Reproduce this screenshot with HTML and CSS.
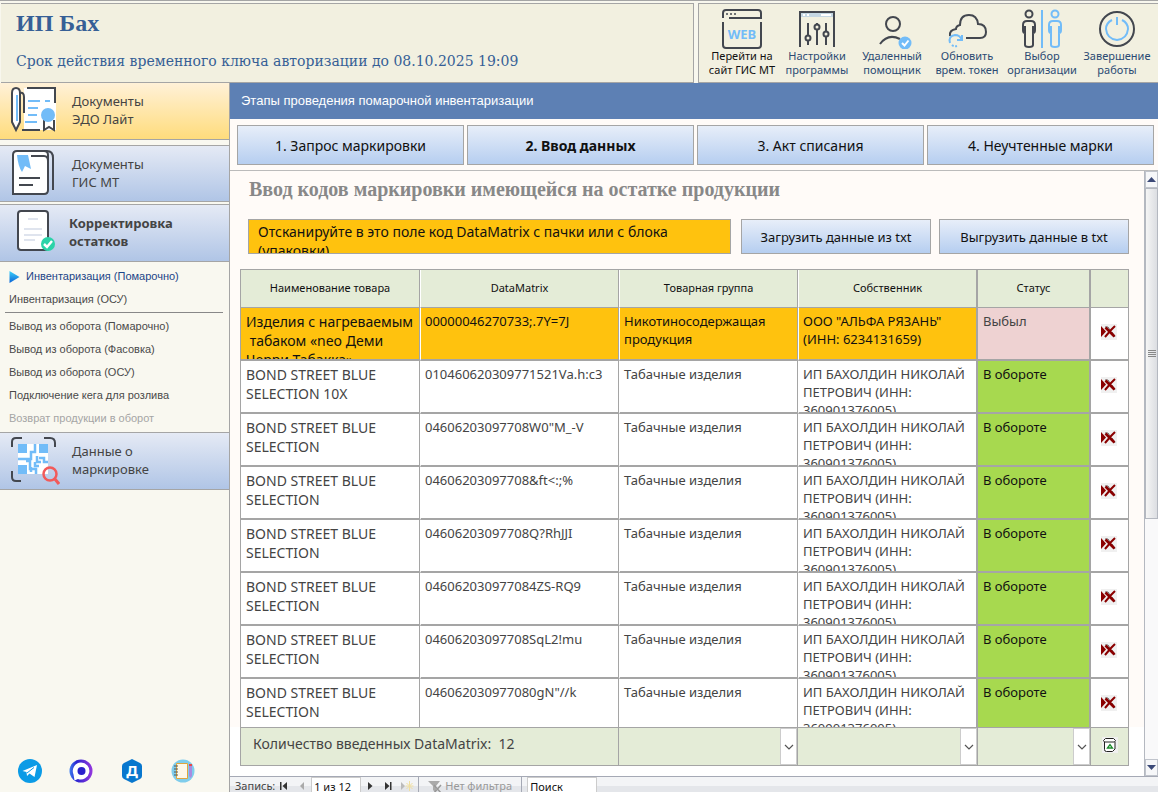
FILE: index.html
```html
<!DOCTYPE html>
<html lang="ru">
<head>
    <meta charset="UTF-8">
    <meta name="viewport" content="width=device-width, initial-scale=1.0">
    <title>Инвентаризация (Помарочно)</title>
    <link rel="stylesheet" href="styles.css">
</head>
<body>

<!-- Shared icons -->
<svg class="sprite" aria-hidden="true">
    <symbol id="icon-delete" viewBox="0 0 16 16">
        <rect width="16" height="16" fill="#f0f0f0"/>
        <path d="M4 3h3l2 3M11 8l3 5M4 13l2-3" stroke="#666" fill="none"/>
        <path d="M0 2l5 5.500L0 13z" fill="#8b0000"/>
        <path d="M4.500 3.500l9 9" stroke="#8b0000" stroke-width="2.600"/>
        <path d="M14 2L10 6 4 13" stroke="#8b0000" stroke-width="2" fill="none"/>
    </symbol>
    <symbol id="icon-chevron" viewBox="0 0 10 6">
        <path d="M1 1l4 4 4-4" fill="none" stroke="#555" stroke-width="1.200"/>
    </symbol>
</svg>

<div class="app">
    <!-- Top header -->
    <header class="header">
        <div class="company">
            <h1>ИП Бах</h1>
            <p>Срок действия временного ключа авторизации до 08.10.2025 19:09</p>
        </div>
        <nav class="toolbar">
            <button class="tool tool-active">
                <svg viewBox="0 0 40 40" fill="none" stroke="#43474f" stroke-width="2">
                    <path d="M1 9V4q0-3 3-3h32q3 0 3 3v5H7M1 13v23q0 3 3 3h32q3 0 3-3V13"/>
                    <path d="M4 5h2M8 5h2M12 5h2" stroke-width="1.500"/>
                    <text x="20" y="30" class="web-text">WEB</text>
                </svg>
                <span>Перейти на<br>сайт ГИС МТ</span>
            </button>
            <button class="tool">
                <svg viewBox="0 0 40 40" fill="none" stroke="#43474f" stroke-width="2">
                    <path d="M3 3h34v5H3z" fill="#c5d7e3" stroke="none"/>
                    <path d="M3 38V3h34v35"/>
                    <path d="M6 6h2M10 6h2M24 6h10" stroke="#fff"/>
                    <path d="M11 14v13M11 32v4M20 14v2M20 21v15M29 14v8M29 27v9"/>
                    <circle cx="11" cy="29" r="2.500"/><circle cx="20" cy="18" r="2.500"/><circle cx="29" cy="25" r="2.500"/>
                </svg>
                <span>Настройки<br>программы</span>
            </button>
            <button class="tool">
                <svg viewBox="0 0 40 40" fill="none" stroke="#43474f" stroke-width="2">
                    <circle cx="21" cy="15" r="7"/>
                    <path d="M8 35Q16 24 28 30"/>
                    <circle cx="33" cy="34" r="6.500" fill="#72bcf8" stroke="none"/>
                    <path d="M30 34l2.500 2.500 4-5" stroke="#fff"/>
                </svg>
                <span>Удаленный<br>помощник</span>
            </button>
            <button class="tool">
                <svg viewBox="0 0 40 40" fill="none" stroke="#43474f" stroke-width="2">
                    <path d="M3 27q-1-6 6-7 0-3 4-4 0-10 9-10 8 0 9 9 8 0 8 8 0 6-6 6H19"/>
                    <path d="M3 34q-2-7 5-8 5 0 7 5M10 31h5v-5" stroke="#72bcf8"/>
                    <path d="M5 36q2 2 5 1" stroke="#72bcf8" stroke-dasharray="2 1.500"/>
                </svg>
                <span>Обновить<br>врем. токен</span>
            </button>
            <button class="tool">
                <svg viewBox="0 0 40 40" fill="none" stroke="#43474f" stroke-width="2">
                    <path d="M20 1v38" stroke="#72bcf8"/>
                    <g><circle cx="7" cy="5" r="3.500"/><path d="M3 24q-2 0-2-3v-5q0-4 4-4h4q4 0 4 4v5q0 3-2 3v12q0 2-4 2t-4-2V17M11 17v8"/></g>
                    <g stroke="#72bcf8"><circle cx="33" cy="5" r="3.500"/><path d="M29 24q-2 0-2-3v-5q0-4 4-4h4q4 0 4 4v5q0 3-2 3v12q0 2-4 2t-4-2V17M37 17v8"/></g>
                </svg>
                <span>Выбор<br>организации</span>
            </button>
            <button class="tool">
                <svg viewBox="0 0 40 40" fill="none" stroke="#43474f" stroke-width="2">
                    <circle cx="20" cy="20" r="17"/>
                    <path d="M15 11q-6 3-6 9 1 10 11 11 10-1 11-11 0-6-6-9M20 8v8" stroke="#72bcf8"/>
                </svg>
                <span>Завершение<br>работы</span>
            </button>
        </nav>
    </header>

    <div class="content">
        <!-- Left menu -->
        <aside class="sidebar">
            <button class="section section-yellow">
                <svg viewBox="0 0 50 50" fill="none" stroke="#43474f" stroke-width="2">
                    <path d="M14 3h32v42H14z" fill="#fff" stroke="none"/>
                    <path d="M17 3h28v15M12 45h18"/>
                    <path d="M2 8q0-5 4-5t4 5v29l-4 8-4-8z" fill="#fff"/>
                    <path d="M10 8q4-1 4 4v16"/>
                    <path d="M7 10v26M18 16h12M35 16h5M18 23h10M18 30h9M15 37h12" stroke="#72bcf8"/>
                    <path d="M34 35v10l5-3 5 3V35" fill="#fff"/>
                    <circle cx="38" cy="30" r="7" fill="#72bcf8" stroke="none"/>
                </svg>
                <span>Документы<br>ЭДО Лайт</span>
            </button>
            <button class="section section-gis">
                <svg viewBox="0 0 50 50" fill="none" stroke="#43474f" stroke-width="2">
                    <path d="M9 3h28q6 0 6 7v32"/>
                    <path d="M3 46V7q0-4 4-4h27q4 0 4 4v35q0 4-4 4z" fill="#fff"/>
                    <path d="M21 8h13q4 0 4 5"/>
                    <path d="M7 7h11l3 14-6-3-3 6q-4-6-5-17z" fill="#72bcf8" stroke="none"/>
                    <path d="M9 30h21M9 37h14"/>
                </svg>
                <span>Документы<br>ГИС МТ</span>
            </button>
            <button class="section section-current">
                <svg viewBox="0 0 50 50" fill="none" stroke="#43474f" stroke-width="2">
                    <rect x="8" y="4" width="30" height="39" rx="3" fill="#fff"/>
                    <path d="M18 12h10M14 22h18M14 28h18M14 33h11" stroke="#dfe4ee"/>
                    <circle cx="38" cy="37" r="7" fill="#2bd3a8" stroke="none"/>
                    <path d="M34 37l3 3 5-6" stroke="#fff" stroke-width="2.500"/>
                </svg>
                <span>Корректировка<br>остатков</span>
            </button>

            <nav class="submenu">
                <a href="#" class="current">
                    <svg viewBox="0 0 10 12"><defs><linearGradient id="arrowFill" x2="0" y2="1"><stop stop-color="#3cd2fa"/><stop offset="1" stop-color="#0a62d6"/></linearGradient></defs><path d="M0 0l10 6-10 6z" fill="url(#arrowFill)"/></svg>
                    Инвентаризация (Помарочно)
                </a>
                <a href="#">Инвентаризация (ОСУ)</a>
                <hr>
                <a href="#">Вывод из оборота (Помарочно)</a>
                <a href="#">Вывод из оборота (Фасовка)</a>
                <a href="#">Вывод из оборота (ОСУ)</a>
                <a href="#">Подключение кега для розлива</a>
                <a class="disabled">Возврат продукции в оборот</a>
            </nav>

            <button class="section">
                <svg viewBox="0 0 50 50" fill="none" stroke="#43474f" stroke-width="2">
                    <path d="M8 9h30v30H8z" fill="#fff" stroke="none"/>
                    <path d="M2 12V7q0-4 4-4h6M34 3h6q5 0 5 5v4M2 36v6q0 4 4 4h5"/>
                    <path d="M8 9h9v9H8zM29 9h9v9h-9zM8 30h9v9H8z" fill="#72bcf8" stroke="none"/>
                    <path d="M25 9v8h-4v7H8M29 23h5v4h4M16 26h4v8h6v5M27 21v6h4M21 37v-5M25 27v4h4" stroke="#72bcf8" stroke-width="2.500"/>
                    <circle cx="40" cy="39" r="6.500" stroke="#f25a5a" stroke-width="2.500"/>
                    <path d="M44.500 43.500L49 49" stroke="#f25a5a" stroke-width="3"/>
                </svg>
                <span>Данные о<br>маркировке</span>
            </button>

            <div class="links">
                <a href="#" aria-label="Telegram">
                    <svg viewBox="0 0 24 24"><circle cx="12" cy="12" r="12" fill="#0b9be6"/><path d="M4.500 12L19 6l-2.500 12-5-3.500-2.500 2.500-.5-4z" fill="#fff"/><path d="M9 14l7-5.500" stroke="#0b9be6"/></svg>
                </a>
                <a href="#" aria-label="MAX">
                    <svg viewBox="0 0 24 24"><defs><linearGradient id="maxFill"><stop stop-color="#3f7ff0"/><stop offset=".3" stop-color="#2a24d0"/><stop offset="1" stop-color="#9637dd"/></linearGradient></defs><circle cx="12" cy="12" r="11.500" fill="url(#maxFill)"/><path d="M12 3.500a8.500 8.500 0 1 1-3 16.500l-3.500 1.500-1-6A8.500 8.500 0 0 1 12 3.500z" fill="#fff"/><circle cx="12.500" cy="12" r="4" fill="#2a20cc"/></svg>
                </a>
                <a href="#" aria-label="Документация">
                    <svg viewBox="0 0 24 24"><path d="M12 0l8 4q2 1 2 3v10q0 2-2 3l-8 4-8-4q-2-1-2-3V7q0-2 2-3z" fill="#0877ce"/><text x="12" y="17" class="link-letter">Д</text></svg>
                </a>
                <a href="#" aria-label="Заметки">
                    <svg viewBox="0 0 24 24"><circle cx="12" cy="12" r="11.500" fill="#7fcdec"/><path d="M5.500 4.500h11v15h-11z" fill="#fdf8e8" stroke="#e0a63c"/><path d="M3 7h4M3 10h4M3 13h4M3 16h4" stroke="#555"/><path d="M18 6h3v11l-1.500 2-1.500-2z" fill="#a98be0"/><path d="M18 5h3v2h-3z" fill="#e94848"/></svg>
                </a>
            </div>
        </aside>

        <!-- Work area -->
        <main class="main">
            <h2 class="title">Этапы проведения помарочной инвентаризации</h2>
            <div class="steps">
                <button>1. Запрос маркировки</button>
                <button class="active">2. Ввод данных</button>
                <button>3. Акт списания</button>
                <button>4. Неучтенные марки</button>
            </div>

            <div class="work">
                <div class="form">
                    <div class="rows">
                        <h3>Ввод кодов маркировки имеющейся на остатке продукции</h3>
                        <div class="scan">
                            <textarea aria-label="Код DataMatrix">Отсканируйте в это поле код DataMatrix с пачки или с блока (упаковки)</textarea>
                            <button>Загрузить данные из txt</button>
                            <button>Выгрузить данные в txt</button>
                        </div>

                        <table class="marks">
                            <thead>
                                <tr>
                                    <th class="col-name">Наименование товара</th>
                                    <th class="col-code">DataMatrix</th>
                                    <th class="col-group">Товарная группа</th>
                                    <th class="col-owner">Собственник</th>
                                    <th class="col-status">Статус</th>
                                    <th class="col-delete"></th>
                                </tr>
                            </thead>
                            <tbody>
                                <tr class="selected">
                                    <td><div>Изделия с нагреваемым<br>&nbsp;табаком «neo Деми<br>Черри Табакка»</div></td>
                                    <td><div>00000046270733;.7Y=7J</div></td>
                                    <td><div>Никотиносодержащая продукция</div></td>
                                    <td><div>ООО "АЛЬФА РЯЗАНЬ" (ИНН: 6234131659)</div></td>
                                    <td class="out"><div>Выбыл</div></td>
                                    <td><button aria-label="Удалить"><svg><use href="#icon-delete"/></svg></button></td>
                                </tr>
                                <tr>
                                    <td><div>BOND STREET BLUE SELECTION 10X</div></td>
                                    <td><div>010460620309771521Va.h:c3</div></td>
                                    <td><div>Табачные изделия</div></td>
                                    <td><div>ИП БАХОЛДИН НИКОЛАЙ ПЕТРОВИЧ (ИНН: 360901376005)</div></td>
                                    <td><div>В обороте</div></td>
                                    <td><button aria-label="Удалить"><svg><use href="#icon-delete"/></svg></button></td>
                                </tr>
                                <tr>
                                    <td><div>BOND STREET BLUE SELECTION</div></td>
                                    <td><div>04606203097708W0"M_-V</div></td>
                                    <td><div>Табачные изделия</div></td>
                                    <td><div>ИП БАХОЛДИН НИКОЛАЙ ПЕТРОВИЧ (ИНН: 360901376005)</div></td>
                                    <td><div>В обороте</div></td>
                                    <td><button aria-label="Удалить"><svg><use href="#icon-delete"/></svg></button></td>
                                </tr>
                                <tr>
                                    <td><div>BOND STREET BLUE SELECTION</div></td>
                                    <td><div>04606203097708&amp;ft&lt;:;%</div></td>
                                    <td><div>Табачные изделия</div></td>
                                    <td><div>ИП БАХОЛДИН НИКОЛАЙ ПЕТРОВИЧ (ИНН: 360901376005)</div></td>
                                    <td><div>В обороте</div></td>
                                    <td><button aria-label="Удалить"><svg><use href="#icon-delete"/></svg></button></td>
                                </tr>
                                <tr>
                                    <td><div>BOND STREET BLUE SELECTION</div></td>
                                    <td><div>04606203097708Q?RhJJI</div></td>
                                    <td><div>Табачные изделия</div></td>
                                    <td><div>ИП БАХОЛДИН НИКОЛАЙ ПЕТРОВИЧ (ИНН: 360901376005)</div></td>
                                    <td><div>В обороте</div></td>
                                    <td><button aria-label="Удалить"><svg><use href="#icon-delete"/></svg></button></td>
                                </tr>
                                <tr>
                                    <td><div>BOND STREET BLUE SELECTION</div></td>
                                    <td><div>046062030977084ZS-RQ9</div></td>
                                    <td><div>Табачные изделия</div></td>
                                    <td><div>ИП БАХОЛДИН НИКОЛАЙ ПЕТРОВИЧ (ИНН: 360901376005)</div></td>
                                    <td><div>В обороте</div></td>
                                    <td><button aria-label="Удалить"><svg><use href="#icon-delete"/></svg></button></td>
                                </tr>
                                <tr>
                                    <td><div>BOND STREET BLUE SELECTION</div></td>
                                    <td><div>04606203097708SqL2!mu</div></td>
                                    <td><div>Табачные изделия</div></td>
                                    <td><div>ИП БАХОЛДИН НИКОЛАЙ ПЕТРОВИЧ (ИНН: 360901376005)</div></td>
                                    <td><div>В обороте</div></td>
                                    <td><button aria-label="Удалить"><svg><use href="#icon-delete"/></svg></button></td>
                                </tr>
                                <tr>
                                    <td><div>BOND STREET BLUE SELECTION</div></td>
                                    <td><div>046062030977080gN"//k</div></td>
                                    <td><div>Табачные изделия</div></td>
                                    <td><div>ИП БАХОЛДИН НИКОЛАЙ ПЕТРОВИЧ (ИНН: 360901376005)</div></td>
                                    <td><div>В обороте</div></td>
                                    <td><button aria-label="Удалить"><svg><use href="#icon-delete"/></svg></button></td>
                                </tr>
                            </tbody>
                        </table>
                    </div>

                    <!-- Total and filters -->
                    <div class="summary">
                        <div class="total">Количество введенных DataMatrix:&nbsp; 12</div>
                        <div class="filter">
                            <select aria-label="Товарная группа"><option></option></select>
                            <span><svg><use href="#icon-chevron"/></svg></span>
                        </div>
                        <div class="filter">
                            <select aria-label="Собственник"><option></option></select>
                            <span><svg><use href="#icon-chevron"/></svg></span>
                        </div>
                        <div class="filter">
                            <select aria-label="Статус"><option></option></select>
                            <span><svg><use href="#icon-chevron"/></svg></span>
                        </div>
                        <button class="clear" aria-label="Очистить">
                            <svg viewBox="0 0 16 16" fill="none" stroke="#222">
                                <rect width="16" height="16" fill="#f0f0f0" stroke="none"/>
                                <path d="M2.500 5v7.500q0 2 2 2h6l2.500-2.500V5" fill="#fff"/>
                                <path d="M1.500 3.500l2-2h8l2 2-1 1.500h-10z" fill="#fff"/>
                                <path d="M5.500 11L8 7.500l2.500 3.500z" stroke="#1c8a2c" stroke-width="1.300"/>
                            </svg>
                        </button>
                    </div>
                </div>

                <div class="scrollbar">
                    <button aria-label="Вверх"><svg viewBox="0 0 9 5"><path d="M0 5l4.500-5L9 5z" fill="#3c4a78"/></svg></button>
                    <div class="track"><div class="thumb"><i></i><i></i><i></i><i></i></div></div>
                    <button aria-label="Вниз"><svg viewBox="0 0 9 5"><path d="M0 0h9L4.500 5z" fill="#3c4a78"/></svg></button>
                </div>
            </div>

            <!-- Record navigation -->
            <div class="records">
                <label for="record">Запись:</label>
                <button aria-label="Первая запись"><svg viewBox="0 0 10 10"><path d="M1 1h1.500v8H1zM8 1v8L3.500 5z" fill="#333"/></svg></button>
                <button aria-label="Предыдущая запись"><svg viewBox="0 0 10 10"><path d="M7 1v8L3 5z" fill="#aaa"/></svg></button>
                <input type="text" id="record" value="1 из 12">
                <button aria-label="Следующая запись"><svg viewBox="0 0 10 10"><path d="M3 1v8l4.500-4z" fill="#333"/></svg></button>
                <button aria-label="Последняя запись"><svg viewBox="0 0 10 10"><path d="M2 1v8l4.500-4zM7 1h1.500v8H7z" fill="#333"/></svg></button>
                <button class="new" aria-label="Новая запись"><svg viewBox="0 0 14 10"><path d="M1 1v8l4-4z" fill="#bbb"/><path d="M9.500 0v10M5.500 5h8M6.500 2l6 6M12.500 2l-6 6" stroke="#f0dfa0"/></svg></button>
                <button class="no-filter" disabled>
                    <svg viewBox="0 0 14 12"><path d="M0 0h12L8 5v7L5 9V5z" fill="#aaa"/><path d="M6 4l7 8M13 4l-7 8" stroke="#999" stroke-width="1.500"/></svg>
                    Нет фильтра
                </button>
                <input type="text" class="search" aria-label="Поиск" value="Поиск">
            </div>
        </main>
    </div>
</div>

</body>
</html>
```

FILE: styles.css
```css
* {
    box-sizing: border-box;
}
body {
    margin: 0;
    font-family: "Noto Sans", sans-serif;
    font-size: 13px;
    color: #444;
    background-color: #f9f8f0;
}
button {
    padding: 0;
    border: none;
    background: none;
    font-family: inherit;
    color: inherit;
    cursor: pointer;
}
.sprite {
    display: none;
}
.app {
    display: flex;
    flex-direction: column;
    height: 100vh;
    overflow: hidden;
}

/* Header */
.header {
    display: flex;
    gap: 4px;
    padding: 2px 0 0 1px;
    border-top: 1px solid #a5a5a5;
    background-color: #f8f7ee;
}
.company {
    flex: 1;
    padding: 5px 15px;
    border: 1px solid #a5a5a5;
    border-left: none;
    background-color: #f2f0e0;
    color: #365f96;
    font-family: "DejaVu Serif", serif;
}
.company h1 {
    margin: 0;
    font-family: "Liberation Serif", serif;
    font-size: 24px;
    line-height: 28px;
}
.company p {
    margin: 14px 0 0;
    font-size: 14px;
    line-height: 20px;
}
.toolbar {
    display: flex;
    height: 80px;
    padding: 5px 0 0 5px;
    border: 1px solid #a5a5a5;
    border-right: none;
    background-color: #f2f0e0;
}
.tool {
    display: flex;
    flex-direction: column;
    align-items: center;
    width: 76px;
    margin-right: -1px;
    font-size: 11px;
    line-height: 14px;
    color: #2b4a73;
}
.tool:last-child {
    margin-right: 3px;
}
.tool-active {
    color: #111;
}
.tool svg {
    width: 40px;
    height: 40px;
}
.web-text {
    fill: #72bcf8;
    stroke: none;
    font-family: "Noto Sans", sans-serif;
    font-size: 13px;
    font-weight: bold;
    text-anchor: middle;
}

/* Left menu */
.content {
    display: flex;
    flex: 1;
    min-height: 0;
}
.sidebar {
    display: flex;
    flex-direction: column;
    width: 230px;
    border-right: 1px solid #a5a5a5;
}
.section {
    display: flex;
    align-items: center;
    gap: 12px;
    height: 58px;
    padding: 0 0 2px 10px;
    border-top: 1px solid #a5a5a5;
    border-bottom: 1px solid #a5a5a5;
    background: linear-gradient(#e5eaf5, #b0c5e6);
    font-size: 13px;
    line-height: 18px;
    text-align: left;
}
.section svg {
    width: 50px;
    height: 50px;
}
.section-yellow {
    height: 57px;
    border-top: none;
    background: linear-gradient(#fff1d8, #ffdc7c);
}
.section-gis {
    height: 57px;
    margin: 5px 0 2px;
}
.section-current {
    gap: 9px;
    font-weight: bold;
}
.submenu {
    padding: 3px 6px 2px 5px;
    font-family: "Liberation Sans", Arial, sans-serif;
    font-size: 11px;
}
.submenu a {
    display: flex;
    align-items: center;
    gap: 6px;
    padding-left: 4px;
    line-height: 23px;
    color: #4a4a4a;
    text-decoration: none;
}
.submenu svg {
    width: 11px;
    height: 12px;
}
.submenu .current {
    color: #1c4587;
}
.submenu .disabled {
    color: #a5a5a5;
}
.submenu hr {
    margin: 1px 0 2px;
    border: none;
    border-top: 1px solid #888;
}
.links {
    display: flex;
    gap: 27px;
    margin-top: auto;
    padding: 0 18px 9px;
}
.links svg {
    display: block;
    width: 24px;
    height: 24px;
}
.link-letter {
    fill: #fff;
    font-family: "Noto Sans", sans-serif;
    font-size: 15px;
    font-weight: bold;
    text-anchor: middle;
}

/* Work area */
.main {
    display: flex;
    flex: 1;
    flex-direction: column;
    min-width: 0;
    background-color: #fffbf8;
}
.title {
    margin: 0;
    padding-left: 11px;
    background-color: #5d80b4;
    color: #fff;
    font-family: "Liberation Sans", Arial, sans-serif;
    font-size: 13px;
    font-weight: normal;
    line-height: 36px;
}
.steps {
    display: flex;
    gap: 3px;
    padding: 6px 4px 5px 7px;
    border-bottom: 1px solid #bbb;
}
.steps button,
.scan button {
    border: 1px solid #a5a5a5;
    background: linear-gradient(#e7eef9, #b6cef0);
    color: #111;
    font-size: 13px;
}
.steps button {
    flex: 1;
    height: 40px;
    font-size: 14px;
}
.steps .active {
    font-weight: bold;
}
.work {
    display: flex;
    flex: 1;
    min-height: 0;
}
.form {
    display: flex;
    flex: 1;
    flex-direction: column;
    min-width: 0;
}
.rows {
    flex: 1;
    min-height: 0;
    padding: 0 15px 0 10px;
    overflow: hidden;
}
.rows h3 {
    margin: 7px 0 18px 9px;
    color: #888;
    font-family: "Liberation Serif", serif;
    font-size: 20px;
    line-height: 23px;
}
.scan {
    display: flex;
    gap: 8px;
    margin: 0 0 15px 8px;
}
.scan textarea {
    flex: 1;
    height: 35px;
    margin-right: 2px;
    padding: 2px 9px;
    border: 1px solid #a5a5a5;
    background-color: #ffc20e;
    color: #111;
    font-family: inherit;
    font-size: 14px;
    line-height: 19px;
    resize: none;
    overflow: hidden;
}
.scan button {
    width: 190px;
}

/* Table */
.marks {
    width: 100%;
    table-layout: fixed;
    border-spacing: 0;
    border-top: 1px solid #a5a5a5;
    border-left: 1px solid #a5a5a5;
}
.marks th,
.marks td {
    padding: 0;
    border-right: 1px solid #a5a5a5;
    border-bottom: 2px solid #a5a5a5;
}
.marks th {
    height: 38px;
    padding-bottom: 2px;
    border-bottom-width: 1px;
    background-color: #e4ecd7;
    color: #111;
    font-size: 11px;
    font-weight: normal;
}
.marks td {
    background-color: #fff;
    vertical-align: top;
}
.marks th:nth-child(2),
.marks th:nth-child(3),
.marks th:nth-child(4),
.marks td:nth-child(2),
.marks td:nth-child(3),
.marks td:nth-child(4) {
    border-left: 1px solid #fff;
}
.marks th:nth-child(4),
.marks th:nth-child(5),
.marks td:nth-child(4),
.marks td:nth-child(5) {
    border-right-width: 2px;
}
.col-name, .col-group {
    width: 179px;
}
.col-code {
    width: 199px;
}
.col-owner {
    width: 180px;
}
.col-status {
    width: 113px;
}
.col-delete {
    width: 38px;
}
.marks td div {
    height: 51px;
    padding: 4px 0 0 4px;
    line-height: 18px;
    overflow: hidden;
}
.marks td:first-child div {
    padding-left: 5px;
    font-size: 14px;
    line-height: 19px;
}
.marks td:nth-child(5) div {
    padding-left: 5px;
}
.marks td:nth-child(5) {
    background-color: #a7d94f;
    color: #111;
}
.marks .selected td:nth-child(-n+4) {
    background-color: #ffc20e;
    color: #111;
}
.marks .selected .out {
    background-color: #eed2d2;
    color: #444;
}
.marks td:last-child {
    padding-right: 2px;
    vertical-align: middle;
    text-align: center;
}
.marks button svg {
    display: block;
    width: 16px;
    height: 16px;
}

/* Totals row */
.summary {
    display: grid;
    grid-template-columns: 379fr 179fr 180fr 113fr 38fr;
    padding: 0 15px 10px 10px;
    background-color: #fff;
}
.summary > * {
    height: 39px;
    border: 1px solid #a5a5a5;
    border-left: none;
    background-color: #e4ecd7;
}
.summary > .total {
    padding-left: 12px;
    border-left: 1px solid #a5a5a5;
    font-size: 14px;
    line-height: 32px;
}
.filter {
    display: grid;
}
.filter select {
    grid-area: 1 / 1;
    width: 100%;
    border: none;
    background: none;
    appearance: none;
}
.filter span {
    display: flex;
    grid-area: 1 / 1;
    align-items: center;
    justify-content: center;
    justify-self: end;
    width: 17px;
    border: 1px solid #ccc;
    background-color: #fff;
    pointer-events: none;
}
.filter svg {
    width: 10px;
    height: 6px;
}
.clear svg {
    width: 16px;
    height: 16px;
}

/* Scrollbar */
.scrollbar {
    display: flex;
    flex-direction: column;
    width: 14px;
    border-left: 1px solid #b4b8c0;
    background-color: #f9f9fa;
}
.scrollbar button {
    height: 17px;
    border: 1px solid #c0c4cc;
    background-color: #f6f7f9;
}
.scrollbar svg {
    display: block;
    width: 9px;
    height: 5px;
    margin: auto;
}
.track {
    flex: 1;
}
.thumb {
    display: flex;
    flex-direction: column;
    align-items: center;
    justify-content: center;
    gap: 1px;
    height: 58%;
    border: 1px solid #b4b8c0;
    background: linear-gradient(90deg, #f5f5f5, #dcdee2);
}
.thumb i {
    width: 8px;
    height: 1px;
    background-color: #888;
}

/* Record navigation */
.records {
    display: flex;
    flex: none;
    align-items: flex-start;
    height: 16px;
    padding-left: 5px;
    border-top: 1px solid #a5a9b5;
    background: linear-gradient(#f3f4f6 9px, #e4e6ea 9px);
    font-size: 11px;
    line-height: 18px;
    overflow: hidden;
}
.records button {
    width: 18px;
    height: 18px;
    line-height: 18px;
}
.records svg {
    width: 10px;
    height: 10px;
}
.records input {
    width: 50px;
    height: 18px;
    padding: 0 2px;
    border: 1px solid #ccc;
    background-color: #fff;
    color: #111;
    font-family: inherit;
    font-size: 11px;
}
.records .new {
    width: 20px;
}
.records .new svg {
    width: 14px;
}
.records .no-filter {
    width: 104px;
    margin: 0 5px 0 1px;
    border: solid #a5a9b5;
    border-width: 0 1px;
    color: #999;
    font-size: 11px;
}
.records .no-filter svg {
    width: 14px;
    height: 12px;
    vertical-align: middle;
}
.records .search {
    width: 70px;
}
```
